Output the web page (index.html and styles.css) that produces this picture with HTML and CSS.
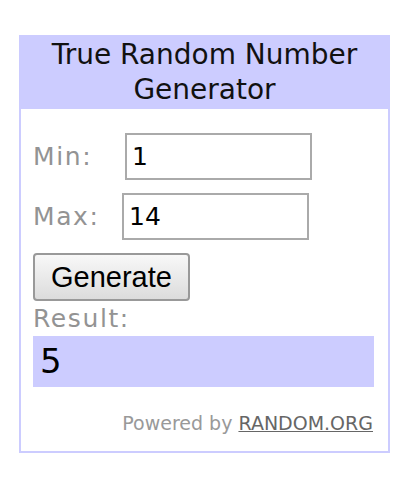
FILE: index.html
```html
<!DOCTYPE html>
<html lang="en">
<head>
  <meta charset="UTF-8" />
  <title>True Random Number Generator</title>
  <link rel="stylesheet" href="styles.css">
</head>
<body>
  <div class="widget">
    <div class="widget-title">True Random Number Generator</div>
    <div class="widget-body">
      <div class="row">
        <label class="lbl lbl-min" for="min">Min:</label>
        <input id="min" class="num" type="text" value="1">
      </div>
      <div class="row">
        <label class="lbl lbl-max" for="max">Max:</label>
        <input id="max" class="num" type="text" value="14">
      </div>
      <button class="gen">Generate</button>
      <div class="lbl result-lbl">Result:</div>
      <div class="result">5</div>
      <div class="powered">Powered by <a href="#">RANDOM.ORG</a></div>
    </div>
  </div>
</body>
</html>
```

FILE: styles.css
```css
* {
  margin: 0;
  padding: 0;
  box-sizing: border-box;
}
body {
  font-family: "DejaVu Sans", Verdana, sans-serif;
  background: #fff;
  padding: 35px 0 0 19px;
}

/* WIDGET */
.widget {
  width: 371px;
  border: 2px solid #ccccff;
  background: #fff;
}
.widget-title {
  background: #ccccff;
  color: #111;
  text-align: center;
  font-size: 28px;
  line-height: 35px;
  padding: 0 10px 2px;
}
.widget-body {
  padding: 24px 12px 17px 12px;
}

/* FORM */
.row {
  display: flex;
  align-items: center;
  margin-bottom: 13px;
}
.lbl {
  color: #939393;
  font-size: 25px;
  letter-spacing: 1.6px;
}
.lbl-min { width: 92px; }
.lbl-max { width: 89px; }
.num {
  width: 187px; height: 47px;
  border: 2px solid #aaa;
  font-family: "DejaVu Sans", Verdana, sans-serif;
  font-size: 25px; color: #000;
  padding: 0 5px;
}
.gen {
  height: 48px; padding: 0 16px;
  font-family: "Liberation Sans", Arial, sans-serif;
  font-size: 29px; color: #000;
  border: 2px solid #999; border-radius: 4px;
  background: linear-gradient(#f8f8f8, #dcdcdc);
}
.result-lbl { line-height: 34px; margin-top: 1px; }
.result {
  background: #ccccff;
  height: 51px; margin-right: 2px;
  font-size: 34px; line-height: 51px;
  padding-left: 7px;
}

/* FOOTER */
.powered {
  text-align: right;
  margin-top: 25px;
  margin-right: 3px;
  font-size: 19px;
  color: #999;
}
.powered a {
  color: #666;
}
```
